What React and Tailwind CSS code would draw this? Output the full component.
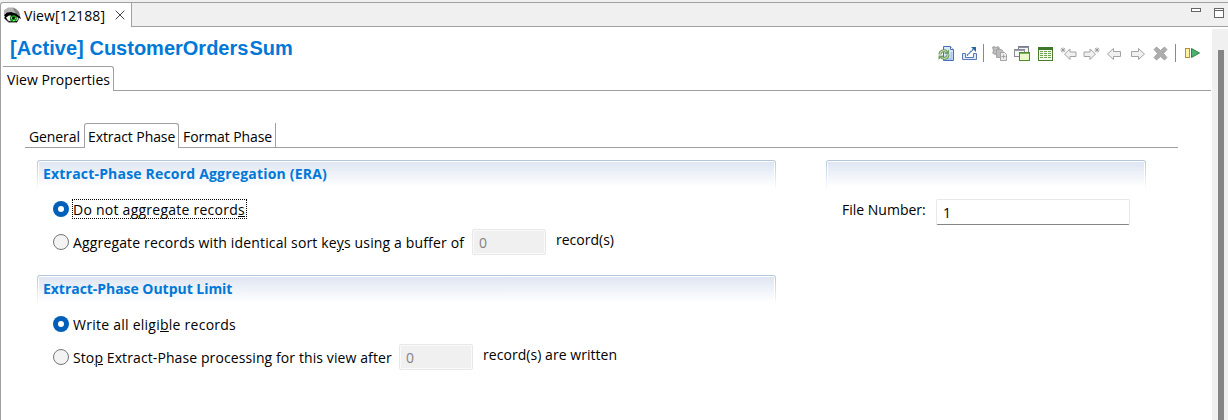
import React from "react";

const Icon = ({ w = 16, h = 16, children, className = "" }) => (
  <svg width={w} height={h} viewBox={`0 0 ${w} ${h}`} className={`block shrink-0 ${className}`}>
    {children}
  </svg>
);

const EyeIcon = () => (
  <Icon w={17} h={17}>
    <path d="M0 3l2-1 2-1.500h5l3 1.500 3 3 1 3v1l-5-3-5-1-4 1-2 2z" fill="#b4b4b4" />
    <path d="M9 .5l3 1.500 3 3 1 4-4-2.500-2-3z" fill="#858585" />
    <path d="M0 8l3-2.500 4-.5 5 1.500 4 3 1 2.500-2-1-1 3-2 2H6l-3-2-3-3 1-1z" fill="#000" />
    <path d="M2 10.500l3-2 2 0-1 3 1 3-3-1z" fill="#f4f4f4" />
    <path d="M12.500 9.500l2 1.500-1.500 3-1 0z" fill="#d8d8d8" />
    <circle cx="9.500" cy="11.500" r="3.200" fill="#17a317" />
    <circle cx="9.500" cy="11" r="1.300" fill="#000" />
    <path d="M7 10h1v2H7zM11 11h1v1h-1zM9 13h2v1H9z" fill="#6bea6b" />
    <path d="M2 13l3 2.500h7" fill="none" stroke="#999" />
  </Icon>
);

const RefreshPageIcon = () => (
  <Icon w={17} h={17}>
    <path d="M5.500 1.500h7l3 3v11h-10z" fill="#d7e6f8" stroke="#4a70b5" />
    <path d="M12.500 1.500v3h3" fill="#fff" stroke="#4a70b5" />
    <path d="M13.500 7v7H7" fill="none" stroke="#a9c8ee" strokeWidth="2" />
    <path d="M2 9.500C2 5.500 7 4.500 9 7.500M10 9.500c0 4-5 5-7 2" fill="none" stroke="#62905a" strokeWidth="3" />
    <path d="M2 9.500C2 5.500 7 4.500 9 7.500M10 9.500c0 4-5 5-7 2" fill="none" stroke="#bdd8a4" strokeWidth="1.200" />
    <path d="M6.500 9h4.500V4.500zM5.500 10.500H.5V15z" fill="#76a066" />
  </Icon>
);

const ExportIcon = () => (
  <Icon w={17} h={17}>
    <path d="M1.500 8.500h3v4h8v-4h3v6h-14z" fill="#dde8f7" stroke="#5878b8" />
    <path d="M6 10.500L13 3.500" stroke="#2d669f" strokeWidth="1.300" strokeDasharray="1.800 .5" />
    <path d="M10 2h5v5z" fill="#2d669f" />
  </Icon>
);

const CopyGearIcon = () => (
  <Icon w={17} h={17}>
    <path d="M1 2l2-1 2 1 2-1 2 2-1 3 1 1-2 3H4L1 8l1-2z" fill="#aaa" />
    <path d="M3 4h3M3 7h2" stroke="#ddd" />
    <path d="M5.500 4.500h5l1.500 2v6H5.500z" fill="#bcbcbc" stroke="#a5a5a5" />
    <path d="M9.500 7.500h4l2 2v6h-6z" fill="#ededed" stroke="#a2a2a2" />
    <path d="M12.500 9.500v4M10.500 11.500h4" stroke="#a2a2a2" />
  </Icon>
);

const WindowsIcon = () => (
  <Icon w={17} h={17}>
    <rect x="4.500" y="1.500" width="10" height="8" fill="#f4f4f7" stroke="#7b7f8c" />
    <path d="M4 2.500h11" stroke="#8b8f9c" />
    <rect x=".5" y="4.500" width="10" height="7" fill="#f7f7f9" stroke="#888c97" />
    <path d="M0 5.500h11" stroke="#989ca7" />
    <rect x="5.500" y="7.500" width="10" height="8" fill="#eef8cf" stroke="#4b8c2d" />
    <path d="M6 8.500h9" stroke="#7db35c" />
  </Icon>
);

const TableIcon = () => (
  <Icon w={17} h={17}>
    <rect x="1.500" y="2.500" width="14" height="13" fill="#f5faee" stroke="#4c7a32" />
    <path d="M1 3.500h15" stroke="#3d762c" strokeWidth="3" />
    <path d="M3 6.500h3M7 6.500h3M11 6.500h3M3 8.500h3M7 8.500h3M11 8.500h3M3 10.500h3M7 10.500h3M11 10.500h3M3 12.500h3M7 12.500h3M11 12.500h3" stroke="#6f9f50" />
  </Icon>
);

const ArrowIcon = ({ right, star }) => (
  <Icon w={17} h={17}>
    <g transform={right ? "matrix(-1 0 0 1 17 0)" : undefined}>
      <path
        d={star ? "M4.500 9l5.500-5v3h6v4.500h-6v3z" : "M1.500 9l6-5.500v3h7v5h-7v3z"}
        fill="#f0f0f0"
        stroke="#a3a3a3"
      />
      {star && <path d="M3 2.500v5M.5 5h5M1.200 3.200l3.600 3.600M4.800 3.200L1.200 6.800" stroke="#999" strokeWidth=".9" />}
    </g>
  </Icon>
);

const DeleteIcon = () => (
  <Icon w={17} h={17}>
    <path d="M2 4.500l2.500-2.500 4 3.500 4-3.500L15 4.500 11.500 8.500 15 12.500 12.500 15l-4-3.500-4 3.500L2 12.500l3.500-4z" fill="#adadad" stroke="#999" strokeWidth=".8" />
  </Icon>
);

const RunIcon = () => (
  <Icon w={17} h={17}>
    <rect x="1.500" y="3.500" width="4" height="9" fill="#fff3a8" stroke="#bd9022" />
    <path d="M7.500 3.500l8 4.500-8 4.500z" fill="#4eb06e" stroke="#27874a" />
  </Icon>
);

const Separator = () => <div className="h-[18px] w-px shrink-0 bg-[#8a8a8a]" />;

const Radio = ({ checked }) =>
  checked ? (
    <span className="flex size-4 shrink-0 items-center justify-center rounded-full bg-[#005fb8]">
      <span className="size-1.5 rounded-full bg-white" />
    </span>
  ) : (
    <span className="size-4 shrink-0 rounded-full border border-[#757575] bg-[#f3f3f3]" />
  );

const SectionHeader = ({ children }) => (
  <div className="h-[30px] rounded-t-[3px] bg-linear-to-b from-[#b2c6dc] to-white px-px pt-px">
    <div className="h-full rounded-t-[2px] bg-white px-px pt-px">
      <div className="h-full bg-linear-to-b from-[#dfe6f2] to-white to-90% pl-1 text-[14px] leading-[23px] font-bold whitespace-nowrap text-[#0078d7]">
        {children}
      </div>
    </div>
  </div>
);

const DisabledField = () => (
  <div className="h-[26px] w-[74px] shrink-0 rounded-[2px] border border-[#e8e8e8] bg-[#f0f0f0] pl-[6px] text-[14px] leading-[25px] text-[#838383] shadow-[inset_0_0_0_1px_#fafafa]">
    0
  </div>
);

const U = ({ children }) => <span className="underline decoration-1 underline-offset-1">{children}</span>;

export default function App() {
  return (
    <div className="flex h-[420px] w-[1228px] flex-col overflow-hidden bg-white font-['Open_Sans','Noto_Sans',sans-serif] text-[14px] whitespace-nowrap text-black">
      <div className="h-[2px] shrink-0 bg-[#f0f0f0]" />
      <div className="flex min-h-0 flex-1 flex-col rounded-tl-[3px] border-t border-l border-[#a0a0a0]">
        <div className="flex h-6 shrink-0">
          <div className="flex w-[131px] items-center border-r border-[#a0a0a0] pl-[3px]">
            <EyeIcon />
            <span className="ml-[3px] w-[82px] tracking-[0.12px]">View[12188]</span>
            <svg width="10" height="10" className="ml-[9px]" viewBox="0 0 10 10">
              <path d="M.7.7l8.600 8.600M9.300.7L.7 9.300" stroke="#444" />
            </svg>
          </div>
          <div className="flex flex-1 items-start justify-end gap-[13px] border-b border-[#a0a0a0] bg-[#f0f0f0] pr-1">
            <div className="mt-[5px] h-1 w-[10px] border border-[#666] bg-white" />
            <div className="mt-[5px] h-[10px] w-[10px] border border-[#666] bg-white">
              <div className="mt-px h-px bg-[#666]" />
            </div>
          </div>
        </div>

        <div className="flex min-h-0 flex-1">
          <main className="flex w-[1210px] shrink-0 flex-col">
            <div className="flex h-[39px] shrink-0 items-start justify-between pl-[9px]">
              <h1 className="mt-[9px] font-['Liberation_Sans',sans-serif] text-[20px] leading-6 font-bold text-[#0078d7]">
                <span className="tracking-[0.06px]">[Active] </span>
                <span>CustomerOrders</span>
                <span className="ml-px">Sum</span>
              </h1>
              <div className="mt-[17px] flex items-center pr-[10px]">
                <RefreshPageIcon />
                <div className="w-[6px]" />
                <ExportIcon />
                <div className="w-[5px]" />
                <Separator />
                <div className="w-[7px]" />
                <div className="flex gap-[6px]">
                  <CopyGearIcon />
                  <WindowsIcon />
                  <TableIcon />
                  <ArrowIcon star />
                  <ArrowIcon right star />
                  <ArrowIcon />
                  <ArrowIcon right />
                  <DeleteIcon />
                </div>
                <div className="w-[6px]" />
                <Separator />
                <div className="w-[8px]" />
                <RunIcon />
              </div>
            </div>

            <div className="flex h-[25px] shrink-0">
              <div className="ml-[2px] w-[111px] rounded-tr-[3px] border-t border-r border-[#a0a0a0] pl-1 leading-[26px] tracking-[0.07px]">
                View Properties
              </div>
              <div className="flex-1 border-b border-[#a0a0a0]" />
            </div>

            <div className="mt-[32px] ml-6 flex h-[25px] w-[1153px] shrink-0 leading-[28px]">
              <div className="w-[59px] border-b border-[#a0a0a0] pl-1 tracking-[-0.1px]">General</div>
              <div className="w-[95px] rounded-t-[3px] border-x border-t border-[#a0a0a0] pl-[3px] leading-[26px] tracking-[-0.08px]">
                Extract Phase
              </div>
              <div className="w-[97px] border-r border-b border-[#a0a0a0] pl-1 tracking-[-0.08px]">Format Phase</div>
              <div className="flex-1 border-b border-[#a0a0a0]" />
            </div>

            <div className="mt-3 ml-9 flex gap-[50px]">
              <div className="w-[739px] shrink-0">
                <SectionHeader>
                  <span className="tracking-[0.19px]">Extract-Phase Record Aggregation (ERA)</span>
                </SectionHeader>
                <div className="mt-[9px] flex h-5 items-center pl-4">
                  <Radio checked />
                  <span className="ml-[3px] h-5 w-[175px] border border-dotted border-black leading-[20px] tracking-[0.25px]">
                    Do not aggregate record<U>s</U>
                  </span>
                </div>
                <div className="mt-[10px] flex h-[26px] items-center pl-4">
                  <Radio />
                  <span className="ml-1 w-[399px] tracking-[0.15px]">
                    Aggregate records with identical sort ke<U>y</U>s using a buffer of
                  </span>
                  <DisabledField />
                  <span className="ml-[10px] -mt-[6px]">record(s)</span>
                </div>
                <div className="mt-5">
                  <SectionHeader>
                    <span className="tracking-[-0.04px]">Extract-Phase Output Limit</span>
                  </SectionHeader>
                </div>
                <div className="mt-[9px] flex h-5 items-center pl-4">
                  <Radio checked />
                  <span className="ml-1 tracking-[0.25px]">
                    Write all eligi<U>b</U>le records
                  </span>
                </div>
                <div className="mt-[10px] flex h-[26px] items-center pl-4">
                  <Radio />
                  <span className="ml-1 w-[326px] tracking-[0.1px]">
                    Sto<U>p</U> Extract-Phase processing for this view after
                  </span>
                  <DisabledField />
                  <span className="ml-[10px] -mt-[6px] tracking-[0.05px]">record(s) are written</span>
                </div>
              </div>

              <div className="w-[320px] shrink-0">
                <SectionHeader />
                <div className="mt-[9px] flex h-[26px] pl-4">
                  <span className="w-[94px] leading-[22px]">File Number:</span>
                  <div className="h-[26px] w-[194px] rounded-[2px] border border-[#e8e8e8] border-b-[#858585] pl-[6px] leading-[26px]">
                    1
                  </div>
                </div>
              </div>
            </div>
          </main>
          <div className="mt-[2px] ml-px flex w-4 shrink-0 justify-center bg-[#f0f0f0] pt-[21px]">
            <div className="ml-px w-[6px] bg-[#858585]" />
          </div>
        </div>
      </div>
    </div>
  );
}
